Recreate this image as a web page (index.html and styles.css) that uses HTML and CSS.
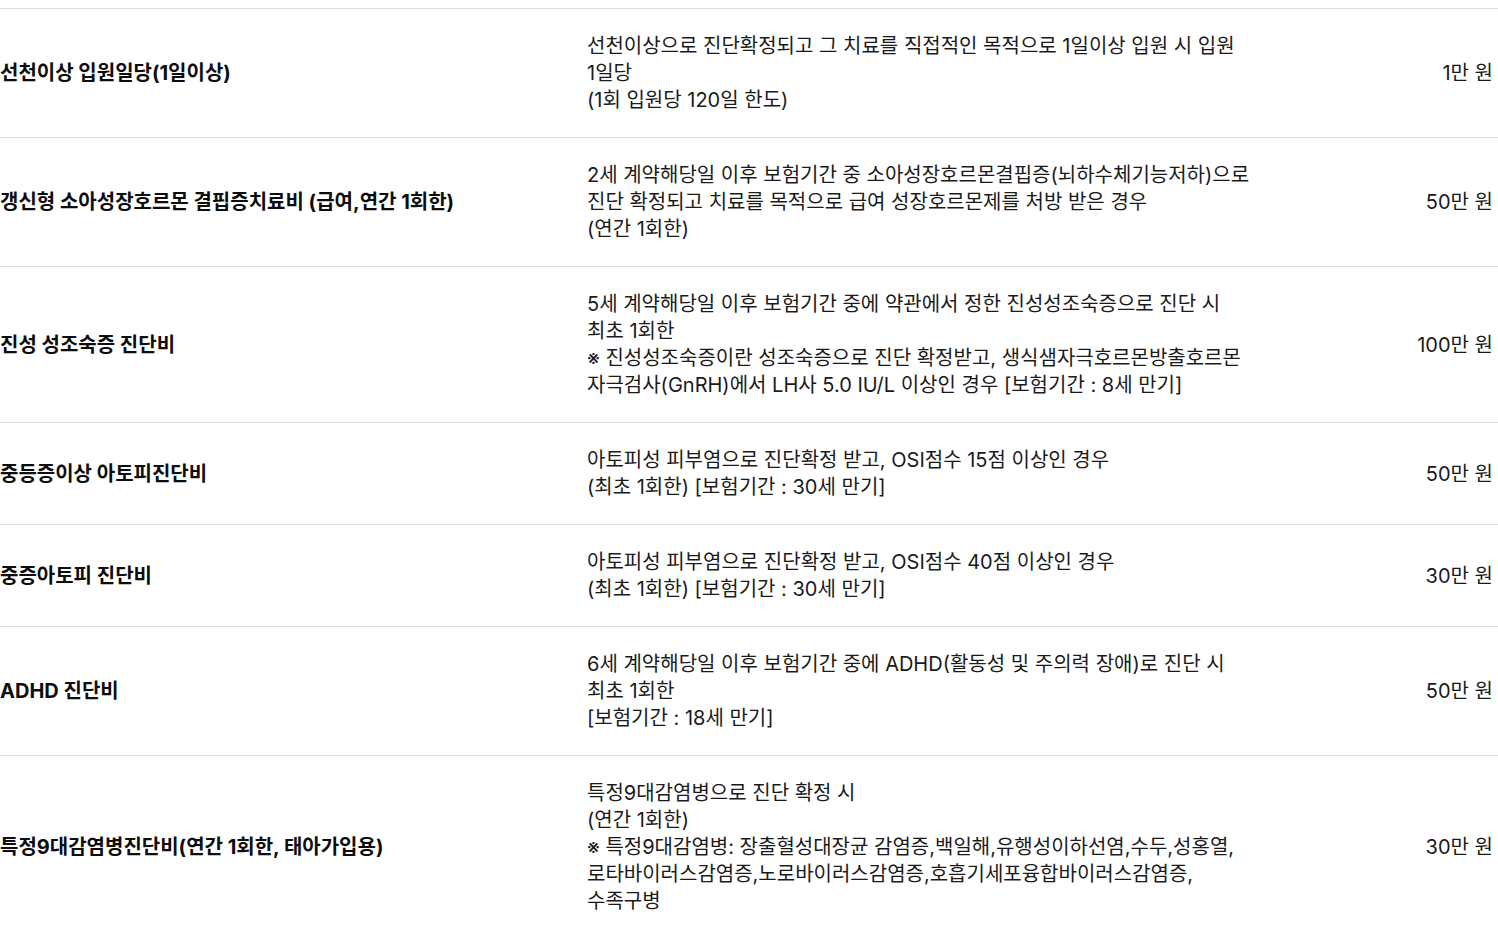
FILE: index.html
```html
<!DOCTYPE html>
<html lang="ko">
<head>
<meta charset="utf-8">
<title>보장내용</title>
<link rel="stylesheet" href="styles.css">
</head>
<body>
<table class="cov">
  <tbody>
    <tr>
      <th class="cov-title">선천이상 입원일당(1일이상)</th>
      <td class="cov-desc">선천이상으로 진단확정되고 그 치료를 직접적인 목적으로 1일이상 입원 시 입원 1일당<br>(1회 입원당 120일 한도)</td>
      <td class="cov-amt">1만 원</td>
    </tr>
    <tr>
      <th class="cov-title">갱신형 소아성장호르몬 결핍증치료비 (급여,연간 1회한)</th>
      <td class="cov-desc">2세 계약해당일 이후 보험기간 중 소아성장호르몬결핍증(뇌하수체기능저하)으로 진단 확정되고 치료를 목적으로 급여 성장호르몬제를 처방 받은 경우<br>(연간 1회한)</td>
      <td class="cov-amt">50만 원</td>
    </tr>
    <tr>
      <th class="cov-title">진성 성조숙증 진단비</th>
      <td class="cov-desc">5세 계약해당일 이후 보험기간 중에 약관에서 정한 진성성조숙증으로 진단 시 최초 1회한<br>※ 진성성조숙증이란 성조숙증으로 진단 확정받고, 생식샘자극호르몬방출호르몬 자극검사(GnRH)에서 LH사 5.0 IU/L 이상인 경우 [보험기간 : 8세 만기]</td>
      <td class="cov-amt">100만 원</td>
    </tr>
    <tr>
      <th class="cov-title">중등증이상 아토피진단비</th>
      <td class="cov-desc">아토피성 피부염으로 진단확정 받고, OSI점수 15점 이상인 경우<br>(최초 1회한) [보험기간 : 30세 만기]</td>
      <td class="cov-amt">50만 원</td>
    </tr>
    <tr>
      <th class="cov-title">중증아토피 진단비</th>
      <td class="cov-desc">아토피성 피부염으로 진단확정 받고, OSI점수 40점 이상인 경우<br>(최초 1회한) [보험기간 : 30세 만기]</td>
      <td class="cov-amt">30만 원</td>
    </tr>
    <tr>
      <th class="cov-title">ADHD 진단비</th>
      <td class="cov-desc">6세 계약해당일 이후 보험기간 중에 ADHD(활동성 및 주의력 장애)로 진단 시 최초 1회한<br>[보험기간 : 18세 만기]</td>
      <td class="cov-amt">50만 원</td>
    </tr>
    <tr>
      <th class="cov-title">특정9대감염병진단비(연간 1회한, 태아가입용)</th>
      <td class="cov-desc">특정9대감염병으로 진단 확정 시<br>(연간 1회한)<br>※ 특정9대감염병: 장출혈성대장균 감염증,백일해,유행성이하선염,수두,성홍열,로타바이러스감염증,노로바이러스감염증,호흡기세포융합바이러스감염증,수족구병</td>
      <td class="cov-amt">30만 원</td>
    </tr>
  </tbody>
</table>
</body>
</html>
```

FILE: styles.css
```css
html, body {
  margin: 0;
  padding: 0;
  background: #ffffff;
}

body {
  padding-top: 8px;
  font-family: "Inter", "Noto Sans CJK KR", sans-serif;
  color: #111111;
}

.cov {
  width: 100%;
  border-collapse: collapse;
  table-layout: fixed;
}

.cov tr {
  border-top: 1px solid #dddddd;
  border-bottom: 1px solid #dddddd;
}

.cov th,
.cov td {
  padding: 24px 0 23px;
  vertical-align: middle;
}

.cov-title {
  width: 587px;
  text-align: left;
  font-size: 20px;
  font-weight: 700;
  line-height: 27px;
  color: #0d0d0d;
}

.cov-desc {
  width: 670px;
  font-size: 20px;
  line-height: 27px;
  color: #1a1a1a;
  word-break: keep-all;
}

.cov-amt {
  text-align: right;
  padding-right: 5px !important;
  font-size: 20px;
  line-height: 27px;
  color: #1a1a1a;
}
```
